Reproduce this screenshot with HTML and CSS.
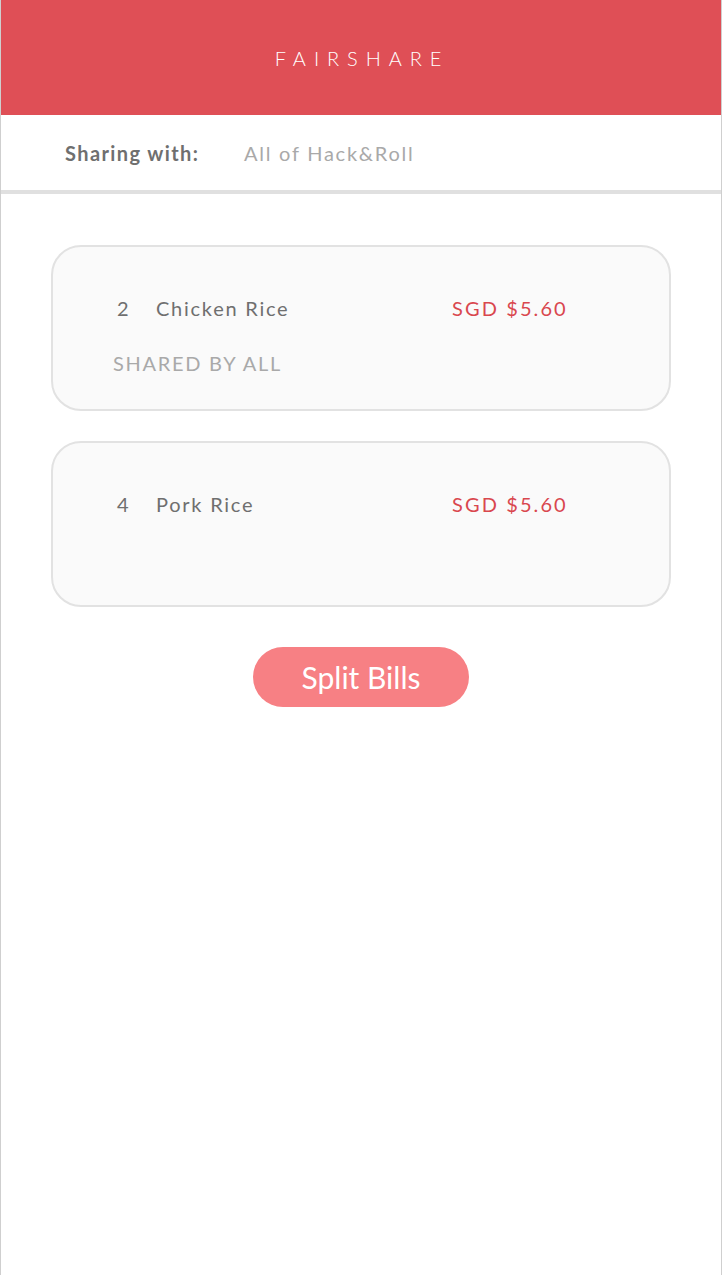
FILE: index.html
```html
<!DOCTYPE html>
<html>
<head>
<meta charset="utf-8">
<link rel="stylesheet" href="styles.css">
</head>
<body>
<div class="app">
  <header class="header">
    <h1 class="title">FAIRSHARE</h1>
  </header>
  <div class="sharing">
    <span class="sharing-label">Sharing with:</span>
    <span class="sharing-value">All of Hack&amp;Roll</span>
  </div>
  <main class="list">
    <div class="card">
      <div class="row">
        <span class="qty">2</span>
        <span class="name">Chicken Rice</span>
        <span class="price">SGD $5.60</span>
      </div>
      <div class="shared">SHARED BY ALL</div>
    </div>
    <div class="card">
      <div class="row">
        <span class="qty">4</span>
        <span class="name">Pork Rice</span>
        <span class="price">SGD $5.60</span>
      </div>
    </div>
    <div class="actions">
      <button class="split-btn">Split Bills</button>
    </div>
  </main>
</div>
</body>
</html>
```

FILE: styles.css
```css
* { box-sizing: border-box; }
html, body { margin: 0; padding: 0; background: #fff; }
body { font-family: Lato, "Open Sans", sans-serif; }

.app {
  min-height: 1275px;
  border-left: 1px solid #cfcfcf;
  border-right: 1px solid #cfcfcf;
}

.header {
  height: 115px;
  background: #df4f56;
  display: flex;
  align-items: center;
  justify-content: center;
}
.title {
  margin: 0 0 0 2px;
  font-weight: 300;
  font-size: 20px;
  letter-spacing: 7.9px;
  color: #fff;
}

.sharing {
  height: 79px;
  border-bottom: 4px solid #e0e0e0;
  display: flex;
  align-items: center;
  padding-left: 64px;
  padding-top: 1px;
  font-size: 20px;
}
.sharing-label {
  color: #6f6f6f;
  font-weight: 700;
  letter-spacing: 1.4px;
  width: 179px;
}
.sharing-value {
  color: #a9a9a9;
  letter-spacing: 1.75px;
}

.list {
  padding: 51px 50px 0 50px;
  display: flex;
  flex-direction: column;
  gap: 30px;
}
.card {
  height: 166px;
  border: 2px solid #e2e2e2;
  border-radius: 30px;
  background: #fafafa;
  padding: 47px 0 0 60px;
}
.row {
  display: flex;
  align-items: center;
  font-size: 20px;
  letter-spacing: 1.75px;
  height: 27px;
}
.qty {
  color: #6f6f6f;
  width: 43px;
  padding-left: 4px;
}
.name {
  color: #6f6f6f;
  width: 296px;
}
.price {
  color: #d9474e;
  letter-spacing: 2.1px;
}
.shared {
  margin-top: 30px;
  font-size: 20px;
  letter-spacing: 1.7px;
  color: #a9a9a9;
}

.actions {
  display: flex;
  justify-content: center;
  padding-top: 10px;
}
.split-btn {
  width: 216px;
  height: 60px;
  border: none;
  border-radius: 30px;
  background: #f78084;
  color: #fff;
  font-family: Lato, sans-serif;
  font-size: 30px;
  padding: 0;
}
```
